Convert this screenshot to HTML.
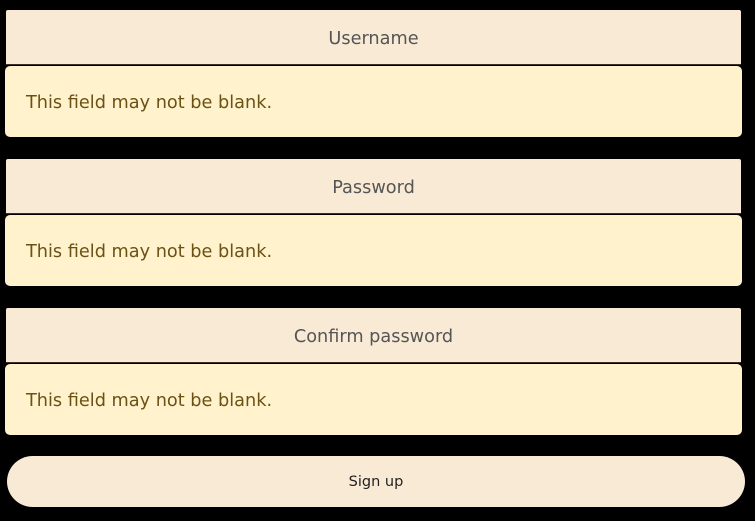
<!DOCTYPE html>
<html><head><style>
body{margin:0;background:#000;width:755px;height:521px;position:relative;font-family:"DejaVu Sans",sans-serif;overflow:hidden}
.in{position:absolute;left:6px;width:735px;height:54px;background:#f9ead6;border-bottom:1px solid #3a3128;border-radius:2px 2px 0 0;text-align:center;line-height:59px;font-size:17.7px;color:#555}
.al{position:absolute;left:5px;width:737px;height:71px;background:#fff2cc;border-radius:5px;color:#6b5214;font-size:17.7px;line-height:74px;box-sizing:border-box;padding-left:21px}
.btn{position:absolute;left:7px;top:456px;width:738px;height:51px;background:#f9ead6;border-radius:26px;text-align:center;line-height:53px;font-size:14.5px;color:#222}
</style></head><body>
<div class="in" style="top:10px">Username</div>
<div class="al" style="top:66px">This field may not be blank.</div>
<div class="in" style="top:159px">Password</div>
<div class="al" style="top:215px">This field may not be blank.</div>
<div class="in" style="top:308px">Confirm password</div>
<div class="al" style="top:364px">This field may not be blank.</div>
<div class="btn">Sign up</div>
</body></html>
